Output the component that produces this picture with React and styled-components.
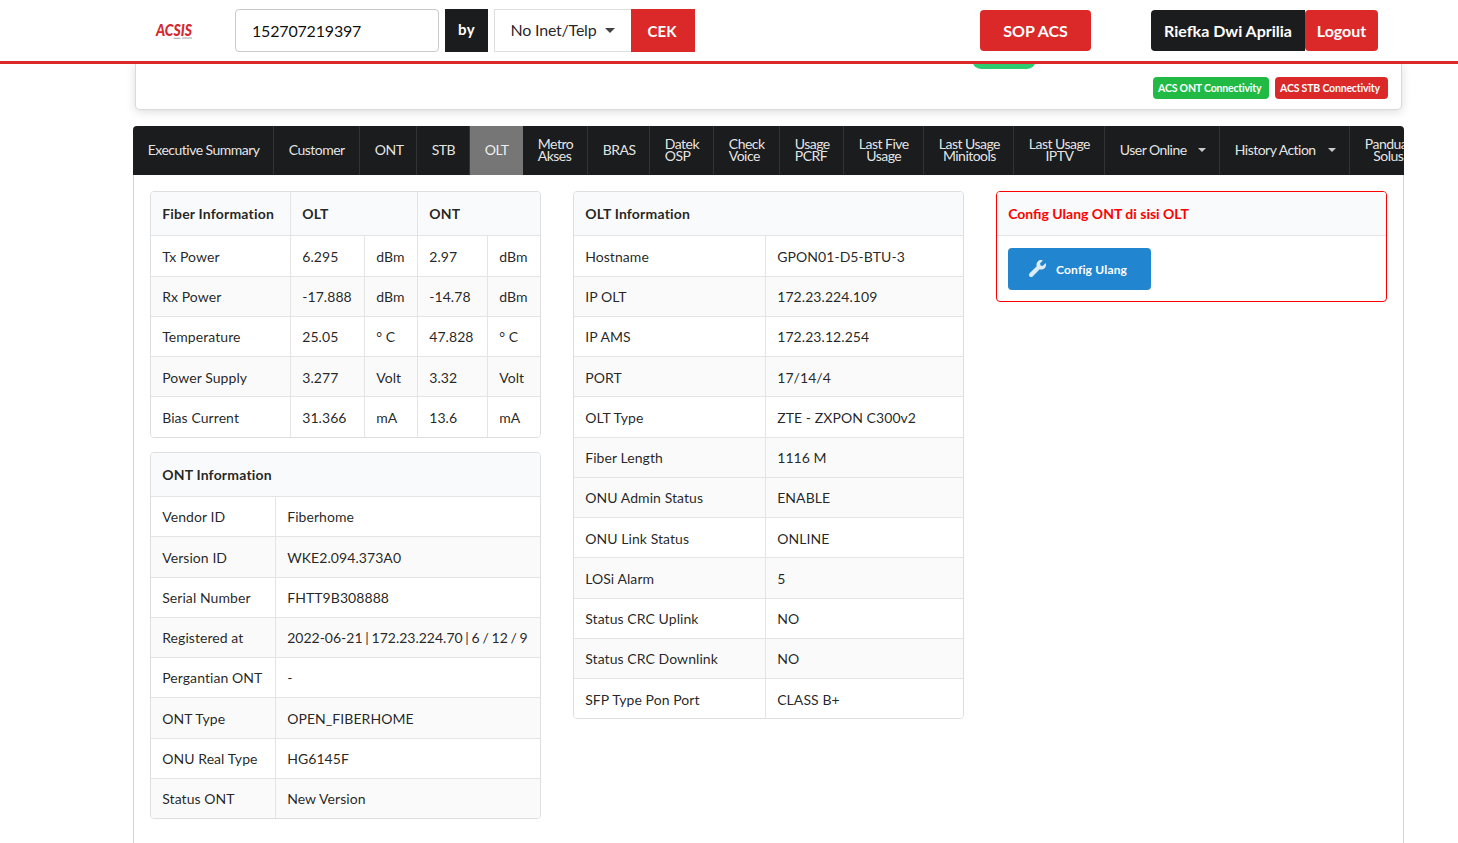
import styled, { createGlobalStyle } from 'styled-components';

const GlobalStyle = createGlobalStyle`
  * {
    box-sizing: border-box;
  }
  body {
    margin: 0;
    background: #FFFFFF;
    color: rgba(0, 0, 0, 0.87);
    font-family: Lato, 'Open Sans', sans-serif;
    font-size: 14px;
    line-height: 18px;
    overflow: hidden;
  }
`;

const Page = styled.div`
  height: 843px;
  display: flex;
  flex-direction: column;
  overflow: hidden;
`;

const TopBar = styled.header`
  height: 64px;
  flex: none;
  display: flex;
  align-items: flex-start;
  padding: 9px 80px 0 155px;
  background: #FFFFFF;
  border-bottom: 3px solid #DB2828;
  position: relative;
  z-index: 2;
`;

const Logo = styled.svg`
  width: 40px;
  height: 20px;
  margin: 12px 40px 0 0;
  overflow: visible;
`;

const SearchInput = styled.input`
  width: 204px;
  height: 43px;
  padding: 0 16px;
  border: 1px solid #C9CACB;
  border-radius: 4px;
  color: rgba(0, 0, 0, 0.95);
  font: 16px Lato, sans-serif;
  letter-spacing: -0.18px;
  outline: none;
`;

const ByLabel = styled.span`
  width: 43px;
  height: 43px;
  margin: 0 6px;
  background: #1B1C1D;
  color: #FFFFFF;
  font-size: 15px;
  font-weight: 700;
  letter-spacing: 0.3px;
  line-height: 41px;
  text-align: center;
`;

const SearchType = styled.div`
  width: 137px;
  height: 43px;
  display: flex;
  align-items: center;
  justify-content: space-between;
  padding: 0 16px 1px 15.6px;
  border: 1px solid #DEDEDF;
  border-right: none;
  font-size: 16px;
  letter-spacing: -0.22px;
`;

const Caret = styled.span`
  flex: none;
  width: 0;
  height: 0;
  border: ${(props) => props.$size}px solid transparent;
  border-top-color: currentColor;
  border-bottom: none;
  opacity: 0.85;
`;

const BarButton = styled.button`
  width: ${(props) => props.$width}px;
  height: ${(props) => props.$height || 41}px;
  margin: ${(props) => props.$margin || '1px 0 0'};
  padding: ${(props) => props.$padding || '0'};
  border: none;
  border-radius: ${(props) => props.$radius || '4px'};
  background: ${(props) => (props.$dark ? '#1B1C1D' : '#DB2828')};
  color: #FFFFFF;
  font: 700 ${(props) => props.$size || 16}px Lato, sans-serif;
  white-space: nowrap;
`;

const SummaryCard = styled.section`
  height: 45px;
  flex: none;
  display: flex;
  align-items: flex-start;
  margin: 0 57px 17px 136px;
  background: #FFFFFF;
  border-radius: 0 0 4px 4px;
  box-shadow: 0 0 0 1px #D9D9DA, 0 2px 10px 1px rgba(34, 36, 38, 0.16);
`;

const OnlinePill = styled.span`
  width: 64px;
  height: 23px;
  margin: -18px 0 0 836px;
  border-radius: 9px;
  background: #2ECC71;
`;

const Tag = styled.span`
  width: ${(props) => props.$width}px;
  height: 22px;
  margin: 13px 0 0 ${(props) => props.$gap}px;
  padding-left: 5px;
  border-radius: 4px;
  background: ${(props) => props.$color};
  color: #FFFFFF;
  font-size: 10.5px;
  font-weight: 700;
  letter-spacing: -0.18px;
  line-height: 23px;
  white-space: nowrap;
`;

const Menu = styled.nav`
  height: 49px;
  flex: none;
  display: flex;
  margin: 0 54px 0 133px;
  overflow: hidden;
  border-radius: 4px 4px 0 0;
  background: #1B1C1D;
`;

const MenuItem = styled.a`
  width: ${(props) => props.$width}px;
  flex: none;
  display: flex;
  align-items: center;
  padding: 0 0 2px 14.8px;
  border-right: 1px solid #323334;
  background: ${(props) => (props.$active ? '#767676' : 'transparent')};
  border-color: ${(props) => (props.$active ? '#767676' : '#323334')};
  color: rgba(255, 255, 255, 0.9);
  font-size: 14px;
  letter-spacing: -0.52px;
  line-height: 12px;
  text-align: ${(props) => (props.$center ? 'center' : 'left')};
  white-space: pre;

  ${Caret} {
    margin: 1px 13px 0 auto;
  }
`;

const Segment = styled.main`
  flex: 1;
  display: grid;
  grid-template-columns: 391px 391px 391px;
  column-gap: 32px;
  align-items: start;
  margin: 0 54px 0 133px;
  padding: 16px 16px 0;
  border: solid #D4D4D5;
  border-width: 0 1px;
`;

const Column = styled.div`
  display: flex;
  flex-direction: column;
  gap: 14.1px;
`;

const Panel = styled.section`
  overflow: hidden;
  border: 1px solid ${(props) => (props.$danger ? '#FF0000' : '#DDDEDF')};
  border-radius: 4px;
`;

const Row = styled.div`
  height: 40.25px;
  display: grid;
  grid-template-columns: ${(props) => props.$columns};
  border-top: 1px solid #E4E4E5;
  background: ${(props) => (props.$striped ? '#FAFAFA' : '#FFFFFF')};
  letter-spacing: 0.07px;
  &:nth-child(2) {
    height: 40.6px;
  }
`;

const Cell = styled.div`
  display: flex;
  align-items: center;
  padding: 1.6px 11px 0 11.2px;
  border-left: 1px solid #E4E4E5;
  white-space: nowrap;
  letter-spacing: ${(props) => (props.$tight ? '0' : 'inherit')};
  word-spacing: ${(props) => (props.$tight ? '-0.85px' : '0')};
  &:first-child {
    border-left: none;
  }
`;

const HeaderRow = styled(Row)`
  height: 43px;
  border-top: none;
  background: #F9FAFB;
  color: ${(props) => (props.$danger ? '#FF0000' : 'inherit')};
  font-weight: 700;
  letter-spacing: ${(props) => (props.$danger ? '0' : '0.19px')};

  ${Cell} {
    padding-top: 1px;
  }
`;

const PanelBody = styled.div`
  height: 66px;
  padding: 12px 11px;
  border-top: 1px solid #E4E4E5;
`;

const ConfigButton = styled.button`
  width: 143px;
  height: 42px;
  display: flex;
  align-items: center;
  padding: 0 0 0 21px;
  border: none;
  border-radius: 4px;
  background: #2185D0;
  color: #FFFFFF;
  font: 700 12px Lato, sans-serif;
  letter-spacing: 0.18px;

  svg {
    width: 17px;
    height: 17px;
    margin: -2px 10px 0 0;
    opacity: 0.85;
  }
`;

const menuItems = [
  { label: 'Executive Summary', width: 141 },
  { label: 'Customer', width: 86 },
  { label: 'ONT', width: 57 },
  { label: 'STB', width: 53 },
  { label: 'OLT', width: 53, active: true },
  { label: 'Metro\nAkses', width: 65 },
  { label: 'BRAS', width: 62 },
  { label: 'Datek\nOSP', width: 64 },
  { label: 'Check\nVoice', width: 66 },
  { label: 'Usage\nPCRF', width: 64 },
  { label: 'Last Five\nUsage', width: 80, center: true },
  { label: 'Last Usage\nMinitools', width: 90, center: true },
  { label: 'Last Usage\nIPTV', width: 91, center: true },
  { label: 'User Online', width: 115, dropdown: true },
  { label: 'History Action', width: 130, dropdown: true },
  { label: 'Panduan\nSolusi', width: 90, center: true },
];

const fiberRows = [
  ['Tx Power', '6.295', 'dBm', '2.97', 'dBm'],
  ['Rx Power', '-17.888', 'dBm', '-14.78', 'dBm'],
  ['Temperature', '25.05', '° C', '47.828', '° C'],
  ['Power Supply', '3.277', 'Volt', '3.32', 'Volt'],
  ['Bias Current', '31.366', 'mA', '13.6', 'mA'],
];

const ontRows = [
  ['Vendor ID', 'Fiberhome'],
  ['Version ID', 'WKE2.094.373A0'],
  ['Serial Number', 'FHTT9B308888'],
  ['Registered at', '2022-06-21 | 172.23.224.70 | 6 / 12 / 9'],
  ['Pergantian ONT', '-'],
  ['ONT Type', 'OPEN_FIBERHOME'],
  ['ONU Real Type', 'HG6145F'],
  ['Status ONT', 'New Version'],
];

const oltRows = [
  ['Hostname', 'GPON01-D5-BTU-3'],
  ['IP OLT', '172.23.224.109'],
  ['IP AMS', '172.23.12.254'],
  ['PORT', '17/14/4'],
  ['OLT Type', 'ZTE - ZXPON C300v2'],
  ['Fiber Length', '1116 M'],
  ['ONU Admin Status', 'ENABLE'],
  ['ONU Link Status', 'ONLINE'],
  ['LOSi Alarm', '5'],
  ['Status CRC Uplink', 'NO'],
  ['Status CRC Downlink', 'NO'],
  ['SFP Type Pon Port', 'CLASS B+'],
];

function InfoTable({ headers, headerColumns = '1fr', columns, rows, flipStripesAt = Infinity }) {
  return (
    <Panel>
      <HeaderRow $columns={headerColumns}>
        {headers.map((header) => (
          <Cell key={header}>{header}</Cell>
        ))}
      </HeaderRow>
      {rows.map((row, rowIndex) => (
        <Row
          key={row[0]}
          $columns={columns}
          $striped={(rowIndex % 2 === 1) !== (rowIndex >= flipStripesAt)}
        >
          {row.map((value, index) => (
            <Cell key={index} $tight={value.includes('|')}>
              {value}
            </Cell>
          ))}
        </Row>
      ))}
    </Panel>
  );
}

function App() {
  return (
    <Page>
      <GlobalStyle />
      <TopBar>
        <Logo viewBox="0 0 40 20">
          <text
            x="1"
            y="15"
            textLength="36"
            lengthAdjust="spacingAndGlyphs"
            fill="#D3292F"
            fontFamily="Lato, sans-serif"
            fontSize="17"
            fontStyle="italic"
            fontWeight="900"
          >
            ACSIS
          </text>
          <path d="M18.5 17.3h7M27 17h10" stroke="#8A8A8A" strokeWidth="0.8" />
        </Logo>
        <SearchInput defaultValue="152707219397" />
        <ByLabel>by</ByLabel>
        <SearchType>
          No Inet/Telp
          <Caret $size={5} />
        </SearchType>
        <BarButton
          $width={64}
          $height={43}
          $margin="0 285px 0 0"
          $padding="0 2px 0 0"
          $radius="0"
          $size={15}
        >
          CEK
        </BarButton>
        <BarButton $width={111} $margin="1px 60px 0 0">
          SOP ACS
        </BarButton>
        <BarButton $width={154} $radius="4px 0 0 4px" $dark>
          Riefka Dwi Aprilia
        </BarButton>
        <BarButton $width={73}>Logout</BarButton>
      </TopBar>

      <SummaryCard>
        <OnlinePill />
        <Tag $width={116} $gap={117} $color="#21BA45">
          ACS ONT Connectivity
        </Tag>
        <Tag $width={113} $gap={6} $color="#DB2828">
          ACS STB Connectivity
        </Tag>
      </SummaryCard>

      <Menu>
        {menuItems.map((item) => (
          <MenuItem
            key={item.label}
            $width={item.width}
            $active={item.active}
            $center={item.center}
          >
            {item.label}
            {item.dropdown && <Caret $size={4} />}
          </MenuItem>
        ))}
      </Menu>

      <Segment>
        <Column>
          <InfoTable
            headers={['Fiber Information', 'OLT', 'ONT']}
            headerColumns="139px 127px 1fr"
            columns="139px 74px 53px 70px 1fr"
            rows={fiberRows}
          />
          <InfoTable headers={['ONT Information']} columns="124px 1fr" rows={ontRows} />
        </Column>
        <InfoTable
          headers={['OLT Information']}
          columns="191px 1fr"
          rows={oltRows}
          flipStripesAt={6}
        />
        <Panel $danger>
          <HeaderRow $columns="1fr" $danger>
            <Cell>Config Ulang ONT di sisi OLT</Cell>
          </HeaderRow>
          <PanelBody>
            <ConfigButton>
              <svg viewBox="0 0 512 512" fill="currentColor">
                <path d="M507.7 109.1c-2.2-9-13.5-12.1-20.1-5.5l-74.4 74.4-67.9-11.3-11.3-67.9 74.4-74.4c6.6-6.6 3.4-17.9-5.7-20.2-47.4-11.7-99.6.9-136.6 37.9-39.6 39.6-50.5 97.1-34.1 147.2L18.7 402.8c-25 25-25 65.5 0 90.5s65.5 25 90.5 0l213.2-213.2c50.1 16.7 107.5 5.7 147.4-34.2 37.1-37.1 49.7-89.3 37.9-136.8z" />
              </svg>
              Config Ulang
            </ConfigButton>
          </PanelBody>
        </Panel>
      </Segment>
    </Page>
  );
}

export default App;
